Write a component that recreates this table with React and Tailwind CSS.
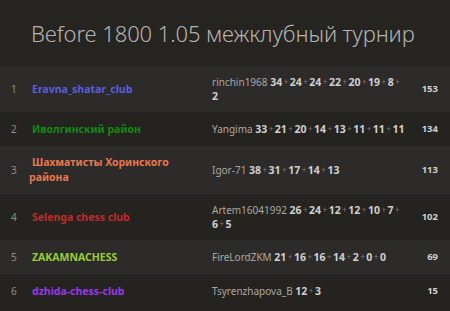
import React from 'react';

const teams = [
    { rank: 1, name: 'Eravna_shatar_club', color: 'text-[#5c5ce0]', player: 'rinchin1968', scores: [34, 24, 24, 22, 20, 19, 8, 2], total: 153 },
    { rank: 2, name: 'Иволгинский район', color: 'text-[#108a10]', player: 'Yangima', scores: [33, 21, 20, 14, 13, 11, 11, 11], total: 134 },
    { rank: 3, name: 'Шахматисты Хоринского района', color: 'text-[#e8774f]', player: 'Igor-71', scores: [38, 31, 17, 14, 13], total: 113 },
    { rank: 4, name: 'Selenga chess club', color: 'text-[#c02a2a]', player: 'Artem16041992', scores: [26, 24, 12, 12, 10, 7, 6, 5], total: 102 },
    { rank: 5, name: 'ZAKAMNACHESS', color: 'text-[#9acd32]', player: 'FireLordZKM', scores: [21, 16, 16, 14, 2, 0, 0], total: 69 },
    { rank: 6, name: 'dzhida-chess-club', color: 'text-[#9b38e6]', player: 'Tsyrenzhapova_B', scores: [12, 3], total: 15 },
];

const Scores = ({ scores }) => (
    <>
        {scores.map((s, i) => (
            <React.Fragment key={i}>
                {i > 0 && <><wbr /><span className="mx-[1.5px] text-[8px] font-normal text-[#7d7b78] align-[1px]">+</span><wbr /></>}
                <strong className="text-[10.5px] font-bold text-[#cfcfcf]">{s}</strong>
            </React.Fragment>
        ))}
    </>
);

export default function App() {
    return (
        <div className="w-[450px] h-[311px] overflow-hidden bg-[#262421] font-['Noto_Sans','Noto_Sans_CJK_SC',sans-serif]">
            <div className="h-[66px] flex items-center pl-[31px]">
                <h1 className="text-[22px] font-light text-[#b4b3b1] tracking-[-0.1px]">Before 1800 1.05 межклубный турнир</h1>
            </div>
            <table className="w-full border-collapse table-fixed">
                <colgroup>
                    <col className="w-[29px]" />
                    <col className="w-[178px]" />
                    <col className="w-[205px]" />
                    <col />
                </colgroup>
                <tbody>
                    {teams.map(t => (
                        <tr key={t.rank} className={`h-[34px] ${t.rank % 2 === 1 ? 'bg-[#2d2b29]' : 'bg-[#252320]'}`}>
                            <td className="pl-[11px] py-[9px] text-[10px] leading-[16px] text-[#8f8e8c] align-middle">{t.rank}</td>
                            <td className={`py-[9px] pr-2 text-[10.5px] leading-[15px] font-bold align-middle indent-[3px] ${t.color}`}>{t.name}</td>
                            <td className="pl-[5px] pr-[6px] py-[9px] text-[10px] leading-[14px] text-[#a9a8a6] align-middle">
                                {t.player} <Scores scores={t.scores} />
                            </td>
                            <td className="pr-[12px] py-[9px] text-[9.5px] font-bold text-right text-[#cfcfcf] align-middle">{t.total}</td>
                        </tr>
                    ))}
                </tbody>
            </table>
        </div>
    );
}
